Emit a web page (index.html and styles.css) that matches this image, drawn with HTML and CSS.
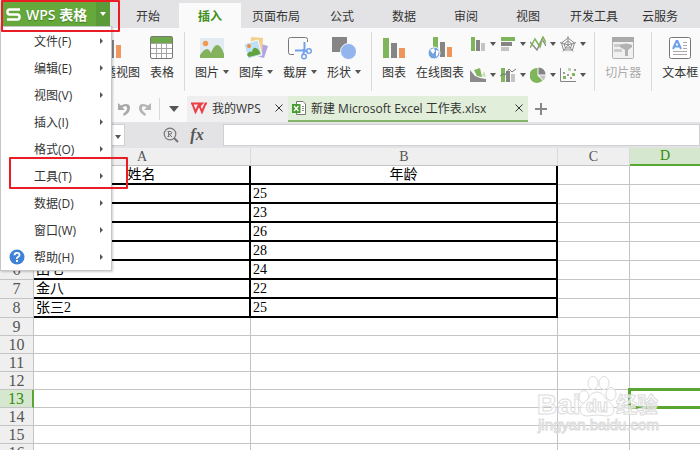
FILE: index.html
```
<!DOCTYPE html>
<html lang="zh-CN">
<head>
  <meta charset="utf-8">
  <title>WPS 表格</title>
  <link rel="stylesheet" href="styles.css">
</head>
<body>
  <header class="top-bar">
    <div class="brand">
      <button class="brand-button">
        <svg width="15" height="13" viewBox="0 0 15 13"><path d="M14 1.5H3.5Q1.5 1.5 1.5 4T3.500 6.500H11.500Q13.500 6.500 13.500 9T11.500 11.500H1" fill="none" stroke="#fff" stroke-width="2.500"/></svg>
        WPS 表格
      </button>
      <button class="brand-arrow" aria-label="菜单"><i class="caret"></i></button>
      <nav class="menu">
        <button>文件(F)</button>
        <button>编辑(E)</button>
        <button>视图(V)</button>
        <button>插入(I)</button>
        <button>格式(O)</button>
        <button>工具(T)</button>
        <button>数据(D)</button>
        <button>窗口(W)</button>
        <button class="help">
          <svg width="16" height="16" viewBox="0 0 16 16"><circle cx="8" cy="8" r="7.500" fill="#3f83d8"/><path d="M5.500 6.200Q5.500 3.800 8 3.800T10.500 6Q10.500 7.200 9 8T8 10" fill="none" stroke="#fff" stroke-width="1.800"/><rect x="7" y="11" width="2" height="2" fill="#fff"/></svg>
          帮助(H)
        </button>
      </nav>
    </div>
    <nav class="tabs">
      <a href="#">开始</a>
      <a href="#" class="active">插入</a>
      <a href="#">页面布局</a>
      <a href="#">公式</a>
      <a href="#">数据</a>
      <a href="#">审阅</a>
      <a href="#">视图</a>
      <a href="#">开发工具</a>
      <a href="#">云服务</a>
    </nav>
  </header>

  <section class="ribbon">
    <div class="group first">
      <button class="tool">
        <svg width="22" height="24" viewBox="0 0 22 24"><path d="M1 2h5v20H1z" fill="#84b15c"/><path d="M8 4h7v18H8z" fill="#888"/><path d="M17 9h5v13h-5z" fill="#f0965f"/></svg>
        <span>数据透视图</span>
      </button>
      <button class="tool">
        <svg width="24" height="24" viewBox="0 0 24 24"><rect x=".5" y=".5" width="22" height="22" rx="1.500" fill="#fff" stroke="#777"/><path d="M1 1h21v6H1z" fill="#6fa84b"/><path d="M1 7.500h21M1 12.500h21M1 17.500h21M6.500 7v15M11.500 7v15M16.500 7v15" stroke="#a5a5a5" fill="none"/></svg>
        <span>表格</span>
      </button>
    </div>
    <div class="group">
      <button class="tool drop">
        <svg width="24" height="24" viewBox="0 0 24 24"><path d="M0 2h24v20H0z" fill="#e3ebf2"/><circle cx="5.500" cy="7.500" r="2.700" fill="#f29a4e"/><path d="M0 22v-3q4-6 7-6 2 0 4 4 3-8 6-8 4 0 7 9v4z" fill="#84b15c"/></svg>
        <span>图片<i class="caret"></i></span>
      </button>
      <button class="tool drop">
        <svg width="24" height="24" viewBox="0 0 24 24"><path d="M17 8l7 2-4 12-8-2z" fill="#b3a4e6"/><path d="M7 1l12 1-1 17-12-1z" fill="#f2d08c"/><path d="M0 8l14-4 4 15-14 4z" fill="#bfe0f6" stroke="#fafafa"/><circle cx="5" cy="10" r="2" fill="#f08a3e"/><path d="M3 19q2-5 5-3 1-5 4-4 3 1 4.500 6L5 21z" fill="#61a23c"/></svg>
        <span>图库<i class="caret"></i></span>
      </button>
      <button class="tool drop">
        <svg width="24" height="24" viewBox="0 0 24 24"><path d="M6 18.500H2.500Q.5 18.500.5 16.500v-13Q.5 1.500 2.500 1.500h15q2 0 2 2V6" fill="none" stroke="#777"/><g fill="none" stroke="#73a2e8" stroke-width="2"><path d="M16.500 6v8l3 2M7 14.500h7l3-1M15 18l2-4"/><circle cx="21" cy="15" r="2.300" stroke-width="1.500"/><circle cx="16" cy="20.500" r="2.300" stroke-width="1.500"/></g></svg>
        <span>截屏<i class="caret"></i></span>
      </button>
      <button class="tool drop">
        <svg width="24" height="24" viewBox="0 0 24 24"><path d="M0 1h15v15H0z" fill="#858585"/><circle cx="16.500" cy="15.500" r="8" fill="#91b5ec" stroke="#fafafa"/></svg>
        <span>形状<i class="caret"></i></span>
      </button>
    </div>
    <div class="group charts">
      <button class="tool">
        <svg width="24" height="24" viewBox="0 0 24 24"><path d="M1 2h6v20H1z" fill="#7fb55b"/><path d="M9 7h6v15H9z" fill="#858585"/><path d="M17 12h6v10h-6z" fill="#ee955e"/></svg>
        <span>图表</span>
      </button>
      <button class="tool">
        <svg width="24" height="24" viewBox="0 0 24 24"><path d="M5 1h5v20H5z" fill="#7fb55b"/><path d="M12 6h5v15h-5z" fill="#858585"/><path d="M19 11h5v10h-5z" fill="#ee955e"/><circle cx="6" cy="17" r="6" fill="#70a3df" stroke="#fafafa"/><path d="M2 14l4-2 1 3-2 3zM8 14l3 1-1 4-2 2z" fill="#fff"/></svg>
        <span>在线图表</span>
      </button>
      <div class="mini-grid">
        <button aria-label="柱形图"><svg width="16" height="16" viewBox="0 0 16 16"><path d="M1 1h4v14H1z" fill="#7fb55b"/><path d="M6 4h4v11H6z" fill="#858585"/><path d="M11 7h4v8h-4z" fill="#c4c4c4"/></svg><i class="caret"></i></button>
        <button aria-label="条形图"><svg width="16" height="16" viewBox="0 0 16 16"><path d="M1 1h14v4H1z" fill="#7fb55b"/><path d="M1 6h11v4H1z" fill="#858585"/><path d="M1 11h8v4H1z" fill="#c4c4c4"/></svg><i class="caret"></i></button>
        <button aria-label="折线图"><svg width="16" height="16" viewBox="0 0 16 16"><path d="M0 6l7 8 5-11 4 7" fill="none" stroke="#888" stroke-width="1.300"/><path d="M0 12l5-9 5 8 3-10 3 6" fill="none" stroke="#7fb55b" stroke-width="1.500"/></svg><i class="caret"></i></button>
        <button aria-label="雷达图"><svg width="16" height="16" viewBox="0 0 16 16"><g fill="none" stroke="#8b8b8b"><path d="M8 2L14.500 7 12.500 14h-9L1.500 7z"/><path d="M8 5l4 3-1.500 4h-5L4 8zM8 0v9M0 6.500l8 2.500 8-2.500M3 15.500L8 9l5 6.500"/></g></svg><i class="caret"></i></button>
        <button aria-label="面积图"><svg width="16" height="16" viewBox="0 0 16 16"><path d="M0 3l5 6 5 2 6 1v3H0z" fill="#8a8a8a"/><path d="M4 3l6-2 2 9-5-1z" fill="#7fb55b"/><path d="M12 9l2-5 2 6z" fill="#c8ddb9"/></svg><i class="caret"></i></button>
        <button aria-label="组合图"><svg width="16" height="16" viewBox="0 0 16 16"><path d="M1 1h4v14H1z" fill="#7fb55b"/><path d="M6 4h4v11H6z" fill="#858585"/><path d="M11 7h4v8h-4z" fill="#c4c4c4"/><path d="M0 9l3-2 2 1 4-6 3 3 4-3" fill="none" stroke="#777"/></svg><i class="caret"></i></button>
        <button aria-label="饼图"><svg width="16" height="16" viewBox="0 0 16 16"><path d="M7.500 1v7.500l5 5A7.500 7.500 0 1 1 7.500 1z" fill="#7fb55b"/><path d="M8.500.5A7 7 0 0 1 15.500 7.500h-7z" fill="#858585"/><path d="M9 8.500h6.500q0 3-2 5z" fill="#c4c4c4"/></svg><i class="caret"></i></button>
        <button aria-label="散点图"><svg width="16" height="16" viewBox="0 0 16 16"><path d="M.5 1v13.500H16" fill="none" stroke="#858585"/><path d="M3 9h3v3H3zM12 6h3v3h-3z" fill="#7fb55b"/><path d="M8 1h3v3H8z" fill="#b9d6a8"/><path d="M3 5h2v2H3zM7 7h2v2H7zM10 10h2v2h-2zM14 2h2v2h-2z" fill="#9a9a9a"/></svg><i class="caret"></i></button>
      </div>
    </div>
    <div class="group">
      <button class="tool" disabled>
        <svg width="24" height="24" viewBox="0 0 24 24"><rect x="1.500" y="1.500" width="21" height="21" rx="1" fill="#f1f1f1" stroke="#b0b0b0"/><path d="M1 1h22v5H1z" fill="#aaa"/><path d="M3 8h10v3H3zM3 13h8v3H3z" fill="#ccc"/><path d="M9 9q6-3 12 0v2l-4 3v6h-3v-6l-5-3z" fill="#b2b2b2"/></svg>
        <span>切片器</span>
      </button>
    </div>
    <div class="group">
      <button class="tool">
        <svg width="24" height="24" viewBox="0 0 24 24"><rect x="1.500" y="1.500" width="21" height="21" rx="2" fill="#fff" stroke="#777"/><path d="M5 13L8.500 5h1L13 13M6.500 10.500h5" fill="none" stroke="#6c9fe8" stroke-width="2"/><path d="M15 6.500h4M15 9.500h4M15 12.500h4M5 15.500h14M5 18.500h14" stroke="#aaa"/></svg>
        <span>文本框</span>
      </button>
    </div>
  </section>

  <div class="doc-bar">
    <div class="quick">
      <button aria-label="撤销"><svg width="14" height="14" viewBox="0 0 14 14"><path d="M1 1v7h7L5.500 5.500Q9 3 10 5.500T6 12l1 2Q14 10 13 5T4 3.500z" fill="#a9a9a9"/></svg></button>
      <button aria-label="恢复"><svg width="14" height="14" viewBox="0 0 14 14"><path d="M13 1v7H6l2.500-2.500Q5 3 4 5.500T8 12l-1 2Q0 10 1 5t9-1.500z" fill="#b5b5b5"/></svg></button>
      <button class="quick-more" aria-label="更多"><i class="caret large"></i></button>
    </div>
    <div class="doc-tab">
      <svg width="16" height="12" viewBox="0 0 16 12"><path d="M0 1.500h11L8.500 4M1.500 2l3 8L8 2.500l3 7.500 3.500-8.500H16" fill="none" stroke="#ed3f45" stroke-width="2"/></svg>
      <a href="#">我的WPS</a>
      <button class="close" aria-label="关闭"><svg width="8" height="8" viewBox="0 0 8 8"><path d="M.5.5l7 7M7.500.5l-7 7" stroke="#333"/></svg></button>
    </div>
    <div class="doc-tab current">
      <svg width="14" height="14" viewBox="0 0 14 14"><path d="M4.500.5H11l2.500 2.500v10.500h-9z" fill="#fff" stroke="#777"/><path d="M10 5.500h2M10 7.500h2M10 9.500h2" stroke="#888"/><path d="M0 3h8.500v9H0z" fill="#4b9931"/><path d="M2 5l4.500 5M6.500 5L2 10" stroke="#fff" stroke-width="1.300"/></svg>
      <a href="#">新建 Microsoft Excel 工作表.xlsx</a>
      <button class="close" aria-label="关闭"><svg width="8" height="8" viewBox="0 0 8 8"><path d="M.5.5l7 7M7.500.5l-7 7" stroke="#333"/></svg></button>
    </div>
    <button class="new-tab" aria-label="新建"><svg width="12" height="12" viewBox="0 0 12 12"><path d="M6 0v12M0 6h12" stroke="#888" stroke-width="2"/></svg></button>
  </div>

  <div class="formula-bar">
    <button class="name-box" aria-label="名称框"><i class="caret"></i></button>
    <svg width="16" height="16" viewBox="0 0 16 16"><circle cx="7" cy="7" r="5.800" fill="none" stroke="#777" stroke-width="1.200"/><path d="M11 11l4 4" stroke="#777" stroke-width="2.200"/><path d="M5.500 4v6M4.500 4.500h3.500q1.500 1.200 0 2.500H6l3 3M4.500 9.500h2" fill="none" stroke="#777"/></svg>
    <button class="fx">fx</button>
    <input type="text" aria-label="编辑栏">
  </div>

  <main class="sheet">
    <table>
      <colgroup><col class="col-head"><col class="col-a"><col class="col-b"><col class="col-c"><col></colgroup>
      <thead>
        <tr><th></th><th>A</th><th>B</th><th>C</th><th class="selected">D</th></tr>
      </thead>
      <tbody>
        <tr class="data title"><th>1</th><td>姓名</td><td>年龄</td><td></td><td></td></tr>
        <tr class="data"><th>2</th><td></td><td>25</td><td></td><td></td></tr>
        <tr class="data"><th>3</th><td></td><td>23</td><td></td><td></td></tr>
        <tr class="data"><th>4</th><td></td><td>26</td><td></td><td></td></tr>
        <tr class="data"><th>5</th><td></td><td>28</td><td></td><td></td></tr>
        <tr class="data"><th>6</th><td>田七</td><td>24</td><td></td><td></td></tr>
        <tr class="data"><th>7</th><td>金八</td><td>22</td><td></td><td></td></tr>
        <tr class="data"><th>8</th><td>张三2</td><td>25</td><td></td><td></td></tr>
        <tr><th>9</th><td></td><td></td><td></td><td></td></tr>
        <tr><th>10</th><td></td><td></td><td></td><td></td></tr>
        <tr><th>11</th><td></td><td></td><td></td><td></td></tr>
        <tr><th>12</th><td></td><td></td><td></td><td></td></tr>
        <tr><th class="selected">13</th><td></td><td></td><td></td><td class="cursor"></td></tr>
        <tr><th>14</th><td></td><td></td><td></td><td></td></tr>
        <tr><th>15</th><td></td><td></td><td></td><td></td></tr>
        <tr><th>16</th><td></td><td></td><td></td><td></td></tr>
      </tbody>
    </table>
  </main>

  <svg class="watermark" width="130" height="70" viewBox="0 0 130 70">
    <g fill="#fff" fill-opacity=".7" stroke="#dcdcdc">
      <ellipse cx="48" cy="31" rx="5" ry="6.500"/>
      <ellipse cx="57" cy="17" rx="5" ry="6.500"/>
      <ellipse cx="68" cy="17" rx="5" ry="6.500"/>
      <ellipse cx="75" cy="28" rx="5" ry="6.500"/>
      <path d="M61 26q6 0 9 7 8 6 8 10 0 7-7 7-10-2-20 0-7 0-7-7 0-4 8-10 3-7 9-7z"/>
      <text class="mark-name" x="1" y="48">Bai</text>
      <text class="mark-du" x="50" y="46">du</text>
      <text class="mark-name cjk" x="80" y="46">经验</text>
      <text class="mark-site" x="2" y="64">jingyan.baidu.com</text>
    </g>
  </svg>
  <div class="callout callout-brand"></div>
  <div class="callout callout-tools"></div>
</body>
</html>
```
FILE: styles.css
```
* {
  box-sizing: border-box;
}
body {
  margin: 0;
  height: 100vh;
  overflow: hidden;
  display: flex;
  flex-direction: column;
  position: relative;
  background: #fff;
  color: #333;
  font-family: "Open Sans", "Noto Sans CJK SC", sans-serif;
  font-size: 12px;
}
button {
  border: none;
  padding: 0;
  background: none;
  color: inherit;
  font: inherit;
}
a {
  color: inherit;
  text-decoration: none;
}
svg {
  flex: none;
}
.caret {
  display: inline-block;
  border: 3px solid transparent;
  border-top: 4px solid #555;
  border-bottom: none;
}
.caret.large {
  border-width: 5px;
  border-top-width: 6px;
  border-bottom: none;
}

/* title bar */
.top-bar {
  display: flex;
  flex: none;
  height: 28px;
  background: #e3e3e5;
}
.brand {
  position: relative;
  display: flex;
  flex: none;
  width: 117px;
  padding: 2px 7px 2px 1px;
}
.brand-button {
  display: flex;
  align-items: center;
  gap: 5px;
  width: 95px;
  padding-left: 5px;
  background: #65a83c;
  color: #fff;
  font-size: 14px;
  font-weight: 600;
  text-shadow: 0 1px 1px #3f7a1d;
  white-space: nowrap;
}
.brand-arrow {
  display: flex;
  align-items: center;
  justify-content: center;
  width: 14px;
  background: #5a9a38;
}
.brand-arrow .caret {
  border-top-color: #fff;
}
.menu {
  position: absolute;
  top: 26px;
  left: 0;
  z-index: 2;
  width: 112px;
  background: #fff;
  border: 1px solid #c6c6c6;
  box-shadow: 1px 1px 2px rgba(0, 0, 0, 0.2);
}
.menu button {
  display: flex;
  align-items: center;
  width: 100%;
  height: 27px;
  padding: 0 8px 0 33px;
  text-align: left;
}
.menu button::after {
  content: "";
  margin-left: auto;
  border: 3px solid transparent;
  border-left-color: #555;
  border-right: none;
}
.menu .help {
  gap: 9px;
  padding-left: 8px;
}
.tabs {
  display: flex;
}
.tabs a {
  min-width: 62px;
  padding: 0 11px;
  line-height: 34px;
  text-align: center;
  white-space: nowrap;
}
.tabs .active {
  margin-top: 3px;
  line-height: 28px;
  background: #fafafa;
  color: #3f8f1c;
  font-weight: bold;
}

/* ribbon */
.ribbon {
  display: flex;
  flex: none;
  height: 68px;
  padding-top: 4px;
  background: #fafafa;
}
.group {
  display: flex;
  flex: none;
  align-items: flex-start;
  gap: 10px;
  height: 59px;
  padding: 4px 10px 0;
  border-right: 1px solid #d9d9d9;
}
.group:last-child {
  border-right: none;
}
.group.first {
  padding-left: 80px;
}
.tool {
  display: flex;
  flex-direction: column;
  align-items: center;
  gap: 4px;
  line-height: 18px;
  white-space: nowrap;
}
.tool:disabled {
  color: #aaa;
}
.tool .caret {
  margin-left: 4px;
  vertical-align: 3px;
}
.mini-grid {
  display: grid;
  grid-template-columns: repeat(4, 30px);
  row-gap: 15px;
  margin: 0 -6px 0 -4px;
}
.mini-grid button {
  display: flex;
  align-items: center;
  gap: 4px;
  height: 16px;
}

/* document tabs */
.doc-bar {
  display: flex;
  flex: none;
  height: 26px;
  background: #fafafa;
}
.quick {
  display: flex;
  align-items: center;
  gap: 7px;
  flex: none;
  width: 187px;
  padding-left: 117px;
}
.quick button {
  display: flex;
}
.quick .quick-more {
  padding: 8px 0 8px 9px;
  border-left: 1px solid #d9d9d9;
}
.doc-tab {
  display: flex;
  align-items: center;
  gap: 5px;
  width: 101px;
  padding: 0 5px 0 4px;
  background: #efeff0;
  border-bottom: 2px solid #efeff0;
  white-space: nowrap;
}
.doc-tab.current {
  width: 240px;
  background: #e1eed9;
  border-bottom-color: #84b56a;
}
.doc-tab .close {
  display: flex;
  margin-left: auto;
}
.new-tab {
  padding: 0 7px;
}
.new-tab svg {
  display: block;
}

/* formula bar */
.formula-bar {
  display: flex;
  flex: none;
  align-items: center;
  height: 26px;
  background: #e3e3e5;
}
.name-box {
  width: 125px;
  height: 22px;
  padding-right: 3px;
  border: 1px solid #d0d0d4;
  background: #fff;
  text-align: right;
  line-height: 16px;
}
.formula-bar svg {
  margin-left: 38px;
}
.fx {
  width: 44px;
  padding-right: 8px;
  color: #555;
  font: italic bold 16px "Liberation Serif", serif;
}
.formula-bar input {
  flex: 1;
  min-width: 0;
  height: 22px;
  border: 1px solid #d0d0d4;
  background: #fff;
}

/* sheet */
.sheet {
  flex: 1;
  min-height: 0;
  overflow: hidden;
}
table {
  width: 100%;
  table-layout: fixed;
  border-collapse: separate;
  border-spacing: 0;
  font: 14px "Liberation Serif", "Noto Sans CJK SC", serif;
  line-height: 16px;
}
.col-head {
  width: 34px;
}
.col-a {
  width: 217px;
}
.col-b {
  width: 307px;
}
.col-c {
  width: 72px;
}
th,
td {
  height: 18px;
  padding: 0 2px;
  border-right: 1px solid #c4c4c4;
  border-bottom: 1px solid #c4c4c4;
  white-space: nowrap;
}
th:last-child,
td:last-child {
  border-right: none;
}
th {
  background: #efefef;
  color: #555;
  font-weight: normal;
}
tbody th {
  font-size: 16px;
}
thead th {
  border-right-color: #d9d9d9;
}
thead th.selected {
  background: #d6e7cf;
  border-bottom: 2px solid #5aa632;
  color: #2f8a08;
}
tbody th.selected {
  background: #d6e7cf;
  border-right: 2px solid #5aa632;
  color: #2f8a08;
}
td {
  color: #000;
}
.data td {
  height: 19px;
}
.data td:nth-child(2),
.data td:nth-child(3) {
  border-right: 2px solid #000;
  border-bottom: 2px solid #000;
}
.title td {
  text-align: center;
}
.cursor {
  position: relative;
}
.cursor::after {
  content: "";
  position: absolute;
  inset: -2px 0 -2px -2px;
  border: 3px solid #5aa632;
  border-right: none;
}

/* overlays */
.watermark {
  position: absolute;
  left: 536px;
  top: 366px;
}
.mark-name {
  font: bold 28px "Liberation Sans", "Noto Sans CJK SC", sans-serif;
}
.mark-name.cjk {
  font-size: 21px;
}
.mark-du {
  font: bold 18px "Liberation Sans", sans-serif;
}
.mark-site {
  font: 15px "Liberation Sans", sans-serif;
}
.callout {
  position: absolute;
  z-index: 3;
  border: 2px solid #ec1c24;
  border-radius: 1px;
  pointer-events: none;
}
.callout-brand {
  left: 1px;
  top: 0;
  width: 119px;
  height: 32px;
}
.callout-tools {
  left: 9px;
  top: 157px;
  width: 119px;
  height: 32px;
}
```
